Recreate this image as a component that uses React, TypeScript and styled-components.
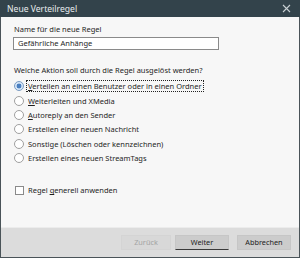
import React from 'react'
import styled, { createGlobalStyle } from 'styled-components'

const GlobalStyle = createGlobalStyle`
  html, body {
    margin: 0;
    padding: 0;
    background: #ffffff;
  }
  body {
    font-family: 'Noto Sans', 'Open Sans', sans-serif;
  }
`

const actions = [
  { key: 'V', rest: 'erteilen an einen Benutzer oder in einen Ordner' },
  { key: 'W', rest: 'eiterleiten und XMedia' },
  { key: 'A', rest: 'utoreply an den Sender' },
  { key: '', rest: 'Erstellen einer neuen Nachricht' },
  { key: '', rest: 'Sonstige (Löschen oder kennzeichnen)' },
  { key: '', rest: 'Erstellen eines neuen StreamTags' },
]

export default function App() {
  return (
    <>
      <GlobalStyle />
      <Window>
        <TitleBar>
          <Title>Neue Verteilregel</Title>
          <CloseIcon width="9" height="9" viewBox="0 0 9 9">
            <path d="M1 1 L8 8 M8 1 L1 8" stroke="#c9d0d4" strokeWidth="1.1" />
          </CloseIcon>
        </TitleBar>
        <Body>
          <Label>Name für die neue Regel</Label>
          <NameInput>Gefährliche Anhänge</NameInput>
          <Question>Welche Aktion soll durch die Regel ausgelöst werden?</Question>
          <RadioList>
            {actions.map((a, i) => (
              <RadioRow key={i}>
                <Radio checked={i === 0} />
                <RadioLabel focused={i === 0}>
                  {a.key && <u>{a.key}</u>}
                  {a.rest}
                </RadioLabel>
              </RadioRow>
            ))}
          </RadioList>
          <CheckRow>
            <Checkbox />
            <span>
              Regel <u>g</u>enerell anwenden
            </span>
          </CheckRow>
        </Body>
        <Footer>
          <Button disabled width={50}>Zurück</Button>
          <Button focused width={54}>Weiter</Button>
          <Button width={54}>Abbrechen</Button>
        </Footer>
      </Window>
    </>
  )
}

const Window = styled.div`
  width: 300px;
  height: 258px;
  box-sizing: border-box;
  display: flex;
  flex-direction: column;
  border: 1px solid #4a5358;
  border-top: none;
  background: #f7f7f7;
  color: #1e1e1e;
  font-size: 7.5px;
`

const TitleBar = styled.div`
  height: 17px;
  flex: none;
  display: flex;
  align-items: center;
  justify-content: space-between;
  padding: 0 9px 0 7px;
  background: #33434b;
  margin: 0 -1px;
`

const Title = styled.span`
  color: #e8ecee;
  font-size: 8.6px;
  padding-top: 1px;
`

const CloseIcon = styled.svg`
  display: block;
  margin-top: -1px;
`

const Body = styled.div`
  flex: 1;
  display: flex;
  flex-direction: column;
  padding: 6px 12px 0 12px;
`

const Label = styled.div`
  line-height: 12px;
  padding-left: 1px;
`

const NameInput = styled.div`
  margin-top: 2px;
  width: 206px;
  height: 13px;
  box-sizing: border-box;
  border: 1px solid #8a8a8a;
  background: #ffffff;
  padding-left: 4px;
  line-height: 11px;
`

const Question = styled.div`
  margin-top: 14px;
  line-height: 12px;
  padding-left: 1px;
`

const RadioList = styled.div`
  margin-top: 3px;
  display: flex;
  flex-direction: column;
`

const RadioRow = styled.div`
  height: 14.4px;
  display: flex;
  align-items: center;
  gap: 2px;
  padding-left: 1px;
`

const Radio = styled.span<{ checked?: boolean }>`
  width: 10px;
  height: 10px;
  box-sizing: border-box;
  border-radius: 50%;
  border: 1px solid ${(p) => (p.checked ? '#7a9cc4' : '#a0a0a0')};
  background: ${(p) =>
    p.checked ? 'radial-gradient(circle, #4a7fc0 0 2.2px, #d6e6f7 2.7px)' : '#ffffff'};
  flex: none;
`

const RadioLabel = styled.span<{ focused?: boolean }>`
  line-height: 10px;
  padding: 0 1px;
  border: 1px dotted ${(p) => (p.focused ? '#222' : 'transparent')};
`

const CheckRow = styled.div`
  margin-top: 19px;
  height: 12px;
  display: flex;
  align-items: center;
  gap: 4px;
  padding-left: 2px;
`

const Checkbox = styled.span`
  width: 9px;
  height: 9px;
  box-sizing: border-box;
  border: 1px solid #8a8a8a;
  background: #ffffff;
  flex: none;
`

const Footer = styled.div`
  height: 28px;
  flex: none;
  background: #dcdcdc;
  border-top: 1px solid #ececec;
  display: flex;
  align-items: center;
  justify-content: flex-end;
  padding: 0 8px 1px 0;
`

const Button = styled.div<{ disabled?: boolean; focused?: boolean; width: number }>`
  width: ${(p) => p.width}px;
  height: 15px;
  box-sizing: border-box;
  display: flex;
  align-items: center;
  justify-content: center;
  margin-left: ${(p) => (p.focused ? '4px' : p.disabled ? '0' : '8px')};
  font-size: 7.3px;
  color: ${(p) => (p.disabled ? '#a4a4a4' : '#222')};
  background: ${(p) => (p.disabled ? '#d8d8d8' : '#cccccc')};
  border: 1px solid ${(p) => (p.disabled ? '#d4d4d4' : '#c6c6c6')};
  border-bottom: 1px solid
    ${(p) => (p.focused ? '#3a3a3a' : p.disabled ? '#d4d4d4' : '#c6c6c6')};
`
